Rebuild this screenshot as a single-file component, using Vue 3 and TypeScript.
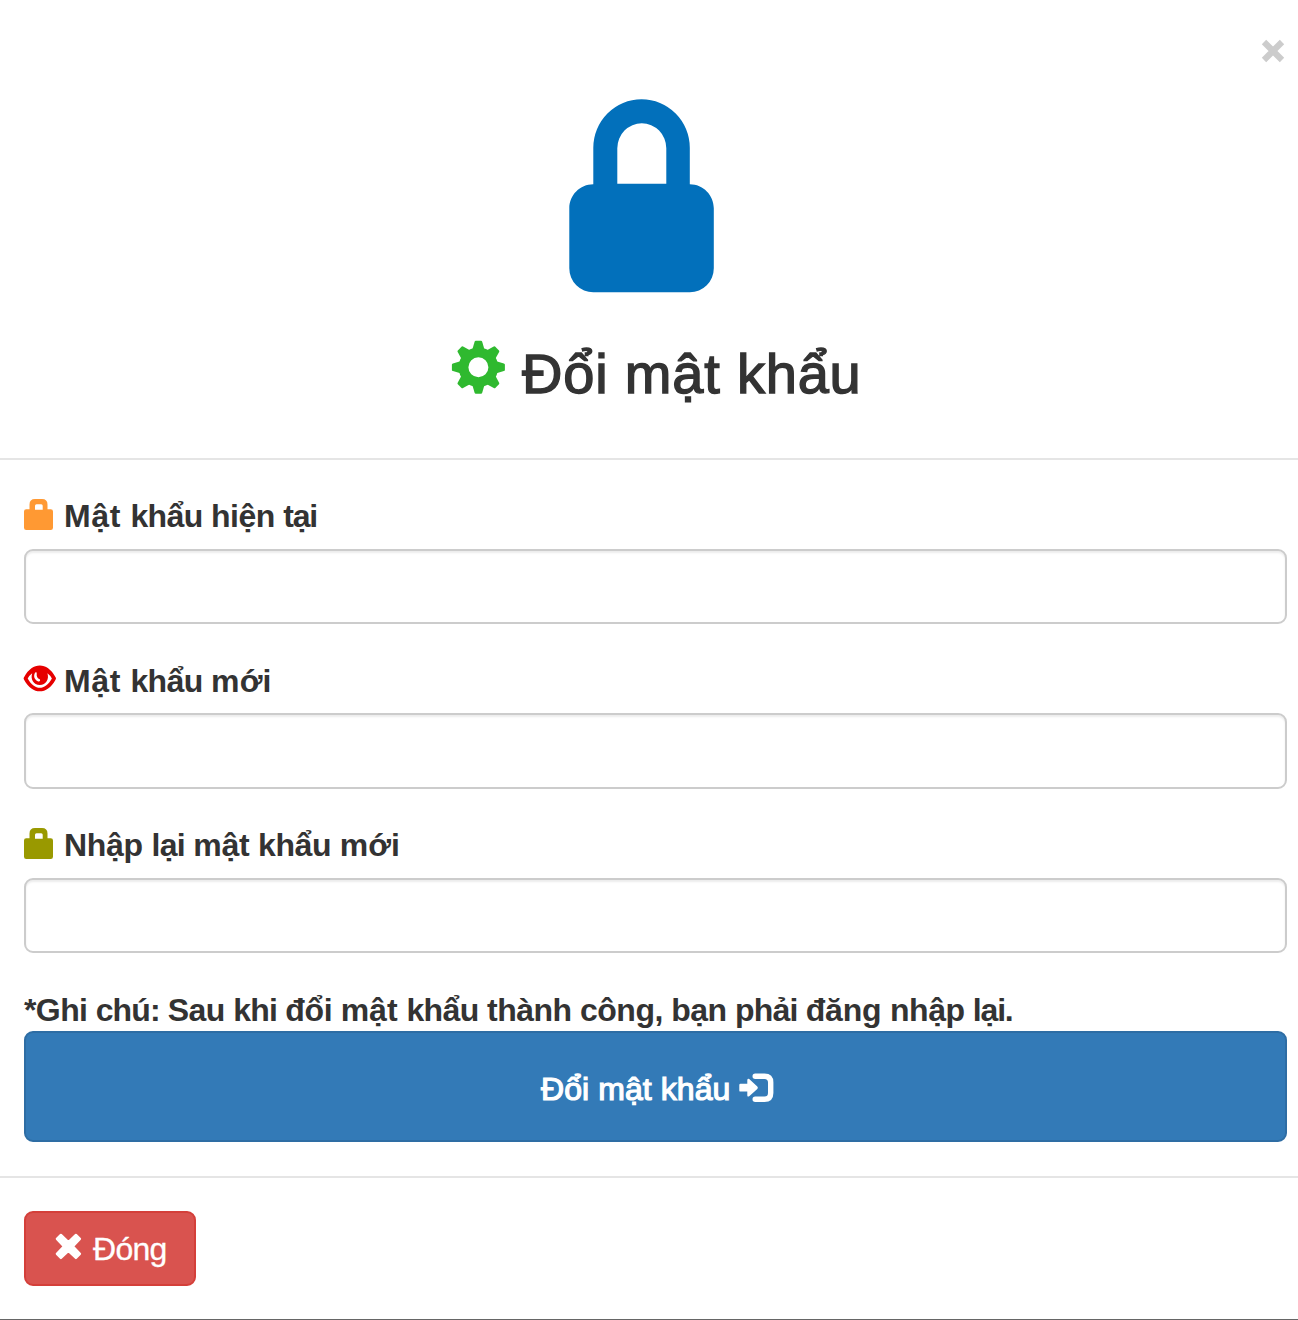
<script setup lang="ts">
import { ref } from 'vue'

// A word and its tracking in pixels.
type Word = [text: string, tracking: number]

interface Field {
  id: string
  label: Word[]
  icon: 'lock' | 'eye'
  tone: string
}

const fields: Field[] = [
  { id: 'current', label: [['Mật ', 0.6], ['khẩu ', -0.6], ['hiện ', -0.5], ['tại', -1.2]], icon: 'lock', tone: 'orange' },
  { id: 'fresh', label: [['Mật ', 0.6], ['khẩu ', -0.6], ['mới', 0.2]], icon: 'eye', tone: 'red' },
  { id: 'repeat', label: [['Nhập ', -0.3], ['lại ', -0.65], ['mật ', -0.25], ['khẩu ', -0.4], ['mới', 0]], icon: 'lock', tone: 'olive' },
]
const note: Word[] = [
  ['*Ghi ', -0.6], ['chú: ', -0.9], ['Sau ', -0.5], ['khi ', -0.75], ['đổi ', -0.4],
  ['mật ', 0], ['khẩu ', -0.6], ['thành ', -0.5], ['công, ', -0.5], ['bạn ', -0.5],
  ['phải ', -0.8], ['đăng ', -0.2], ['nhập ', -0.5], ['lại.', -1.2],
]
const values = ref<Record<string, string>>({ current: '', fresh: '', repeat: '' })
</script>

<template>
  <div class="modal">
    <header class="head">
      <button class="dismiss" type="button" aria-label="Đóng">
        <svg width="24" height="24" viewBox="0 0 24 24"><path d="M3 3 21 21M21 3 3 21" stroke="#ccc" stroke-width="6.2" fill="none" /></svg>
      </button>
      <svg class="hero" width="146" height="195" viewBox="0 0 146 195">
        <path fill="#0270bb" fill-rule="evenodd" d="M24.500 85V48.500a48.250 48.500 0 0 1 96.500 0V85c13.500 0 24 11 24 24v60a24 24 0 0 1-24 24H24.500A24 24 0 0 1 .5 169v-60c0-13 10.500-24 24-24zM48.500 84.500H97.500V49a24.500 25 0 0 0-49 0z" transform="translate(-.2 .3)" />
      </svg>
      <h1 class="title">
        <svg class="gear" width="54" height="54" viewBox="-27 -27 54 54">
          <g fill="#2fb92f" transform="translate(.4 .3)">
            <path v-for="n in 8" :key="n" d="M-6-18-3.800-25.500Q-3.500-26.500-2.600-26.500H2.600Q3.500-26.500 3.800-25.500L6-18z" :transform="`rotate(${n * 45})`" />
            <path fill-rule="evenodd" d="M0-19.800a19.800 19.800 0 1 0 0 39.600a19.800 19.800 0 1 0 0-39.600zM0-10a10 10 0 1 1 0 20a10 10 0 1 1 0-20z" />
          </g>
        </svg>
        <span class="title-text">Đổi mật khẩu</span>
      </h1>
    </header>

    <form class="body" @submit.prevent>
      <div v-for="f in fields" :key="f.id" class="field">
        <label :for="f.id" class="label">
          <svg class="icon" :class="f.tone" width="33" height="32" viewBox="0 0 33 32">
            <path v-if="f.icon === 'lock'" fill="currentColor" fill-rule="evenodd" d="M5.500 12.300V7.500Q5.500 2 11 2H18Q23.500 2 23.500 7.500V12.300H26.800Q29 12.300 29 14.500V30.800Q29 33 26.800 33H2.200Q0 33 0 30.800V14.500Q0 12.300 2.200 12.300zM11 12.800H18.700V8.700Q18.700 7.200 17.200 7.200H12.500Q11 7.200 11 8.700z" />
            <g v-else>
              <path fill="currentColor" d="M-.4 17.300Q-.4 16.600.2 15.900C4.500 8.200 10 4.500 15.800 4.500S27.100 8.200 31.400 15.900Q32 16.600 32 17.300T31.400 18.900C27.100 26.600 21.600 30.300 15.800 30.300S4.500 26.600.2 18.900Q-.4 18-.4 17.300z" />
              <path fill="#fff" d="M3.700 17.400Q5.500 14.200 8.200 12.200C6.200 18 9.500 24 15.800 24S25.400 18 23.400 12.200Q26.100 14.200 27.900 17.400C24.300 23.800 20 26.800 15.800 26.800S7.300 23.800 3.700 17.400z" />
              <path fill="#fff" d="M12.200 11.300Q13 11.600 12.700 12.500C12.300 15.400 13.600 17.600 15.700 18.200Q16.500 18.800 15.900 20Q15.300 20.800 13.700 20.200C10.200 18.700 9.200 14.800 11.200 11.600Q11.700 11.100 12.200 11.300z" />
            </g>
          </svg>
          <span :class="['label-text', f.id]"><span v-for="[text, tracking] in f.label" :key="text" :style="{ letterSpacing: tracking + 'px' }">{{ text }}</span></span>
        </label>
        <input :id="f.id" v-model="values[f.id]" class="input" type="password" />
      </div>
      <p class="note"><span v-for="[text, tracking] in note" :key="text" :style="{ letterSpacing: tracking + 'px' }">{{ text }}</span></p>
      <button class="submit" type="submit">
        <span class="submit-text">Đổi mật khẩu</span>
        <svg class="enter" width="35" height="30" viewBox="0 0 35 30">
          <path fill="none" stroke="#fff" stroke-width="5.400" stroke-linecap="round" d="M16.200 3.300H25.500Q31.700 3.300 31.700 9.500V20Q31.700 26.300 25.500 26.300H16.200" />
          <path fill="#fff" d="M1.500 10.800H8.300V7Q8.700 4.900 10.200 6.100L18.300 13.400Q19.500 14.700 18.300 16L10.200 23.200Q8.600 24.300 8.300 22.400V18.600H1.500Q.3 18.600.3 17.400V12Q.3 10.800 1.500 10.800z" />
        </svg>
      </button>
    </form>

    <footer class="foot">
      <button class="close" type="button">
        <svg class="cross" width="26" height="26" viewBox="0 0 26 26">
          <path fill="#fff" stroke="#fff" stroke-width="2.400" stroke-linejoin="round" transform="translate(.4 .4)" d="M5.500 1.500 13 8.600 20.500 1.500 24.500 5.500 17.400 13 24.500 20.500 20.500 24.500 13 17.400 5.500 24.500 1.500 20.500 8.600 13 1.500 5.500z" />
        </svg>
        <span class="close-text">Đóng</span>
      </button>
    </footer>
  </div>
</template>

<style>
body {
  background: #fff;
  overflow: hidden;
}
</style>

<style scoped>
.modal {
  box-sizing: border-box;
  width: 1298px;
  height: 1320px;
  display: flex;
  flex-direction: column;
  background: #fff;
  border-bottom: 1px solid #666;
  color: #333;
  font-family: "Liberation Sans", Arial, sans-serif;
  font-size: 32px;
}
button {
  font: inherit;
  box-sizing: border-box;
  padding: 0;
  cursor: pointer;
}
.head {
  box-sizing: border-box;
  height: 460px;
  border-bottom: 2px solid #e5e5e5;
  display: flex;
  flex-direction: column;
}
.dismiss {
  align-self: flex-end;
  margin: 39px 13px 0 0;
  width: 24px;
  height: 24px;
  border: 0;
  background: none;
}
.dismiss svg {
  display: block;
}
.hero {
  margin: 36px 0 0 569px;
  overflow: visible;
}
.title {
  margin: 46px 0 0 451px;
  display: flex;
  align-items: flex-start;
  font-size: 56px;
  font-weight: 400;
  line-height: 62px;
  white-space: nowrap;
}
.gear {
  flex: none;
  overflow: visible;
}
.title-text {
  margin: 3px 0 0 17px;
  -webkit-text-stroke: 1.4px #333;
  letter-spacing: 0.8px;
}
.body {
  box-sizing: border-box;
  padding: 37px 11px 0 24px;
  height: 716px;
}
.field {
  height: 164px;
}
.field:nth-child(2) {
  height: 165px;
}
.label {
  display: flex;
  height: 52px;
  line-height: 38px;
  font-weight: 700;
  white-space: nowrap;
}
.icon {
  flex: none;
  overflow: visible;
}
.label-text {
  margin-left: 7px;
  white-space: pre;
}
.orange {
  color: #ff9933;
}
.red {
  color: #e60000;
}
.olive {
  color: #999900;
}
.input {
  display: block;
  box-sizing: border-box;
  width: 100%;
  height: 75px;
  padding: 12px 24px;
  border: 2px solid #ccc;
  border-radius: 9px;
  background: #fff;
  box-shadow: inset 0 2px 2px rgba(0, 0, 0, 0.075);
  font: inherit;
  color: #555;
  outline: none;
}
.field:nth-child(2) .input {
  height: 76px;
}
.fresh {
  padding-top: 1px;
}
.note {
  margin: 0;
  padding-top: 1px;
  height: 40px;
  line-height: 38px;
  font-weight: 700;
  white-space: pre;
}
.submit {
  display: flex;
  width: 100%;
  height: 111px;
  border: 2px solid #2e6da4;
  border-radius: 9px;
  background: #337ab7;
  color: #fff;
  justify-content: flex-start;
  align-items: flex-start;
  padding: 37px 0 0 515px;
  line-height: 38px;
}
.submit-text {
  -webkit-text-stroke: 1.2px #fff;
  letter-spacing: 0.08px;
  white-space: nowrap;
}
.enter {
  margin: 3px 0 0 8px;
  overflow: visible;
}
.foot {
  border-top: 2px solid #e5e5e5;
  padding: 33px 0 0 24px;
}
.close {
  display: flex;
  align-items: flex-start;
  width: 172px;
  height: 75px;
  border: 2px solid #d43f3a;
  border-radius: 9px;
  background: #d9534f;
  color: #fff;
  padding: 17px 0 0 29px;
  line-height: 38px;
}
.cross {
  margin-top: 3px;
  overflow: visible;
}
.close-text {
  margin-left: 12px;
  letter-spacing: -0.7px;
  -webkit-text-stroke: 0.3px #fff;
}
</style>
